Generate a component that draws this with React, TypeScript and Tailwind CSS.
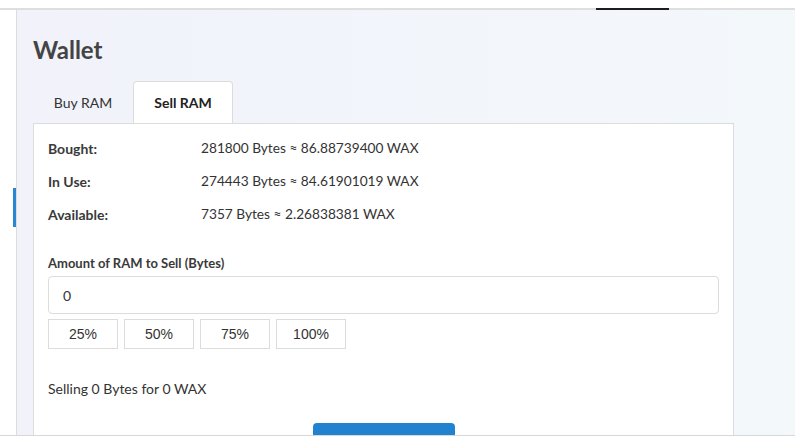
import { useState } from 'react'

const rows = [
  { label: 'Bought:', value: '281800 Bytes ≈ 86.88739400 WAX' },
  { label: 'In Use:', value: '274443 Bytes ≈ 84.61901019 WAX' },
  { label: 'Available:', value: '7357 Bytes ≈ 2.26838381 WAX' },
]

const presets = ['25%', '50%', '75%', '100%']

export default function App() {
  const [tab, setTab] = useState<'buy' | 'sell'>('sell')
  const [amount, setAmount] = useState('0')

  return (
    <div
      className="flex h-[438px] w-[795px] flex-col overflow-hidden bg-white text-[#333]"
      style={{ fontFamily: 'Lato, "Open Sans", sans-serif' }}
    >
      {/* top nav strip */}
      <div className="h-[8px] bg-white" />
      <div className="flex h-[2px] bg-[#dedede]">
        <div className="ml-[596px] h-full w-[73px] bg-[#1b1d1f]" />
      </div>

      <div className="flex min-h-0 flex-1">
        {/* sidebar edge */}
        <div className="w-[17px] shrink-0 border-r border-[#dcdcdc] bg-white">
          <div className="ml-[13px] mt-[178px] h-[39px] w-[3px] bg-[#2a86d1]" />
        </div>

        {/* main */}
        <div className="flex min-w-0 flex-1 flex-col bg-gradient-to-r from-[#f1f2fa] to-[#f3f8fb] pl-[16px] pr-[61px] pt-[24px]">
          <h1 className="text-[24px] font-bold leading-[32px] text-[#444]">Wallet</h1>

          <div className="mt-[15px] flex">
            <button
              onClick={() => setTab('buy')}
              className={`h-[42px] w-[100px] rounded-t-[4px] text-[14px] ${
                tab === 'buy' ? 'relative z-10 -mb-px border border-b-0 border-[#dcdcdc] bg-white font-bold' : 'text-[#333]'
              }`}
            >
              Buy RAM
            </button>
            <button
              onClick={() => setTab('sell')}
              className={`h-[42px] w-[100px] rounded-t-[4px] text-[14px] ${
                tab === 'sell' ? 'relative z-10 -mb-px border border-b-0 border-[#dcdcdc] bg-white font-bold text-[#222]' : 'text-[#333]'
              }`}
            >
              Sell RAM
            </button>
          </div>

          <div className="flex-1 border border-[#dcdcdc] bg-white px-[14px] pt-[14px]">
            <div className="flex flex-col gap-[13px]">
              {rows.map((r) => (
                <div key={r.label} className="flex h-[20px] items-center">
                  <div className="w-[153px] text-[14px] font-bold text-[#3a3a3a]">{r.label}</div>
                  <div className="text-[13.7px]">{r.value}</div>
                </div>
              ))}
            </div>

            <div className="mt-[29px] text-[13px] font-bold leading-[20px] text-[#3a3a3a]">
              Amount of RAM to Sell (Bytes)
            </div>
            <input
              value={amount}
              onChange={(e) => setAmount(e.target.value)}
              className="mt-[3px] block h-[38px] w-full rounded-[4px] border border-[#dcdcdc] px-[14px] text-[14px] outline-none"
            />
            <div className="mt-[5px] flex gap-[6px]" style={{ fontFamily: '"Liberation Sans", Arial, sans-serif' }}>
              {presets.map((p) => (
                <button key={p} className="h-[30px] w-[70px] border border-[#dcdcdc] bg-white text-[14px] text-[#333]">
                  {p}
                </button>
              ))}
            </div>

            <div className="mt-[30px] text-[14px] leading-[20px]">Selling 0 Bytes for 0 WAX</div>

            <div className="mt-[24px] flex justify-center">
              <button className="h-[36px] w-[142px] rounded-[4px] bg-[#2183d0]" />
            </div>
          </div>
        </div>
      </div>

      <div className="h-[1px] shrink-0 bg-[#d8d8d8]" />
      <div className="h-[2px] shrink-0 bg-white" />
    </div>
  )
}
